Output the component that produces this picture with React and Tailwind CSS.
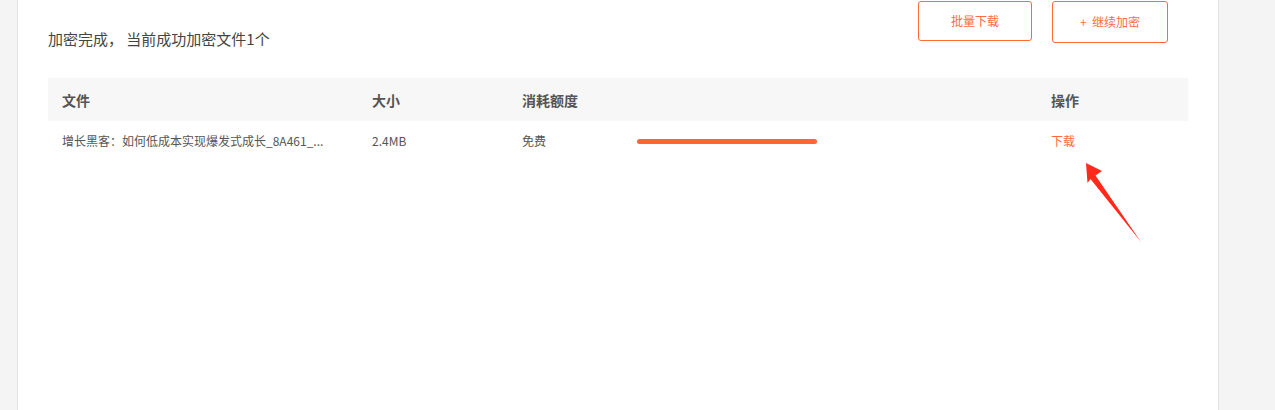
export default function App() {
  const font = { fontFamily: '"Noto Sans CJK SC", "Noto Sans", sans-serif' };
  return (
    <div className="min-h-[410px] h-[410px] bg-[#f4f4f4] pl-[17px] overflow-hidden" style={font}>
      <div className="relative w-[1202px] h-full bg-white border-x border-[#e2e2e2] px-[30px]">
        <div className="flex justify-between items-start h-[49px]">
          <div className="pt-[29px] text-[15px] leading-[20px] text-[#444]">加密完成， 当前成功加密文件1个</div>
          <div className="flex items-start gap-[20px] pt-[1px] pr-[20px]">
            <button className="w-[114px] h-[40px] border border-[#ff6b35] rounded-[3px] text-[12px] text-[#ff6b45] bg-white">批量下载</button>
            <button className="w-[116px] h-[42px] border border-[#ff6b35] rounded-[3px] text-[12px] text-[#ff6b45] bg-white">+&nbsp;&nbsp;继续加密</button>
          </div>
        </div>
        <div className="mt-[29px]">
          <div className="grid grid-cols-[310px_150px_529px_151px] h-[43px] items-center bg-[#f7f7f7] text-[14px] font-semibold text-[#555] pt-[2px]">
            <div className="pl-[14px]">文件</div>
            <div className="pl-[14px]">大小</div>
            <div className="pl-[14px]">消耗额度</div>
            <div className="pl-[14px]">操作</div>
          </div>
          <div className="grid grid-cols-[310px_150px_529px_151px] h-[40px] items-center text-[12px] text-[#555]">
            <div className="pl-[14px] whitespace-nowrap overflow-hidden">增长黑客：如何低成本实现爆发式成长_8A461_...</div>
            <div className="pl-[14px]">2.4MB</div>
            <div className="pl-[14px] flex items-center">
              <span className="w-[115px]">免费</span>
              <div className="w-[180px] h-[5px] rounded-full bg-[#ff6633] mt-[1px]"></div>
            </div>
            <div className="pl-[14px] text-[#ff6b45]">下载</div>
          </div>
        </div>
        <svg className="absolute left-0 top-0 pointer-events-none" width="1202" height="410" viewBox="17 0 1202 410">
          <polygon points="1085,163 1101,171 1094.5,175.5 1140,242 1089.5,179 1086.5,183" fill="#ff2a1a" />
        </svg>
      </div>
    </div>
  );
}
